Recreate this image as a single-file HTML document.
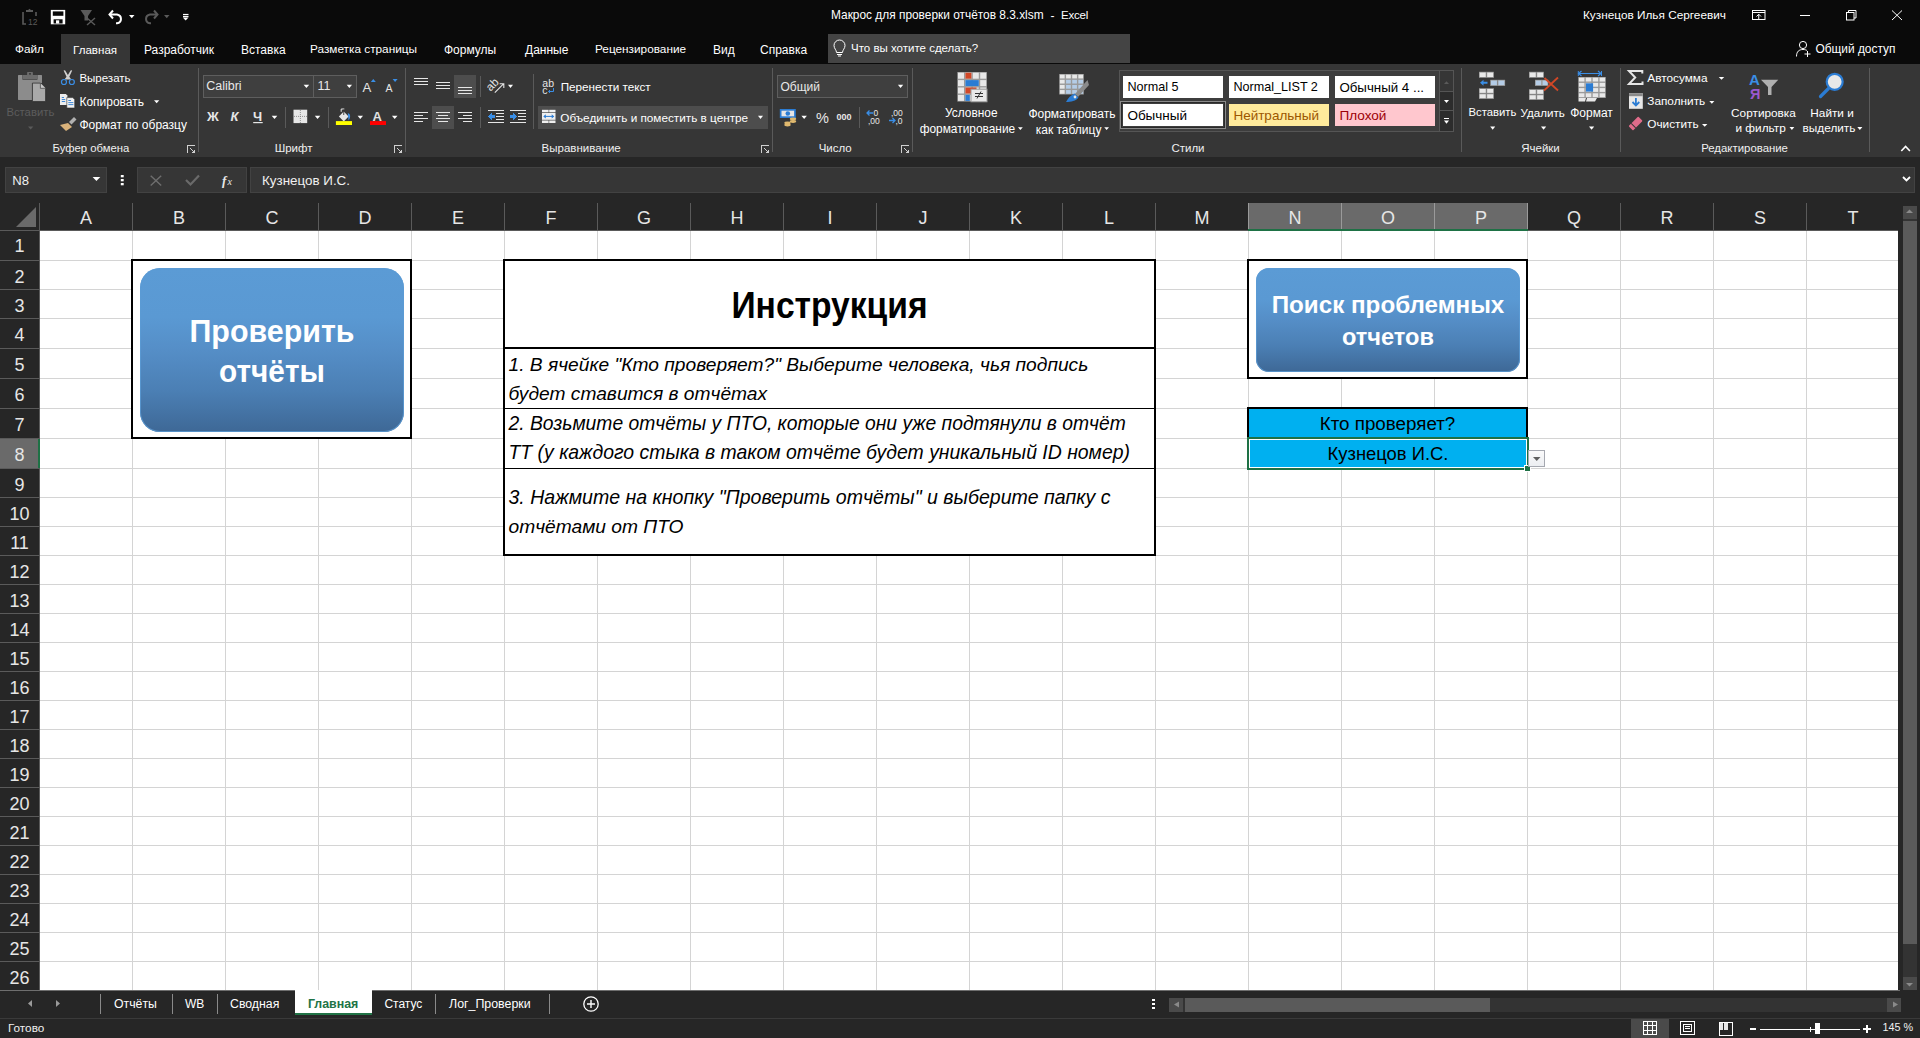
<!DOCTYPE html>
<html><head><meta charset="utf-8">
<style>
*{margin:0;padding:0;box-sizing:border-box}
html,body{width:1920px;height:1038px;overflow:hidden;background:#262626;font-family:"Liberation Sans",sans-serif;color:#fff}
.a{position:absolute}
.t{position:absolute;white-space:nowrap;line-height:1}
svg{position:absolute;overflow:visible}
.tab{font-size:12px;color:#fff}
.grp{font-size:11.5px;color:#e8e8e8}
.rb{font-size:12px;color:#fff}
.hd{font-size:18px;color:#e6e6e6;text-align:center;line-height:1}
</style></head><body>

<div class="a" style="left:0;top:0;width:1920px;height:64px;background:#0a0a0a"></div>
<div class="a" style="left:0;top:64px;width:1920px;height:93px;background:#363636"></div>
<div class="a" style="left:0;top:157px;width:1920px;height:833px;background:#262626"></div>
<svg width="200" height="34" style="left:0;top:0">
<g fill="none" stroke="#5a5a5a" stroke-width="1.6">
<path d="M23 12 V24 H26 M36 12 V16"/>
</g>
<path d="M27 11 L29.5 8.8 L32 11 Z" fill="#5a5a5a"/>
<rect x="26" y="10" width="7" height="2" fill="#5a5a5a"/>
<text x="28" y="24.5" font-family="Liberation Sans" font-size="8.5" fill="#5a5a5a">12</text>
<rect x="50.8" y="9.9" width="14.4" height="14.4" fill="#fff"/>
<rect x="52.8" y="11.4" width="10.6" height="4.4" fill="#0a0a0a"/>
<rect x="53.6" y="19.3" width="9" height="4.2" fill="#0a0a0a"/>
<rect x="56" y="20.3" width="3.2" height="3.2" fill="#fff"/>
<path d="M80.5 10 H92 L88 16 V20.5 H84.5 V16 Z" fill="#5a5a5a"/>
<path d="M87 18 L95 25 M95 18 L87 25" stroke="#5a5a5a" stroke-width="1.4"/>
<path d="M113 10.5 L109.5 14.5 L113 18.5" fill="none" stroke="#fff" stroke-width="2"/>
<path d="M110 14.5 H117 A5 4.5 0 0 1 117 23.3 H116" fill="none" stroke="#fff" stroke-width="2"/>
<path d="M129 15 H134.5 L131.75 18.3 Z" fill="#fff"/>
<path d="M154 10.5 L157.5 14.5 L154 18.5" fill="none" stroke="#5a5a5a" stroke-width="2"/>
<path d="M157 14.5 H150 A5 4.5 0 0 0 150 23.3 H151" fill="none" stroke="#5a5a5a" stroke-width="2"/>
<path d="M164 15 H169.5 L166.75 18.3 Z" fill="#5a5a5a"/>
<rect x="183" y="13.9" width="5.5" height="1.2" fill="#fff"/>
<rect x="183" y="15.9" width="5.5" height="1.2" fill="#fff"/>
<path d="M182.8 17.5 H188.5 L185.65 20.5 Z" fill="#fff"/>
</svg>
<div class="t" style="left:831px;top:9.8px;font-size:11.9px;color:#fff">Макрос для проверки отчётов 8.3.xlsm</div>
<div class="t" style="left:1050.5px;top:9.8px;font-size:12px;color:#fff">-</div>
<div class="t" style="left:1061px;top:9.8px;font-size:11.5px;color:#fff;letter-spacing:-0.2px">Excel</div>
<div class="t" style="left:1583px;top:9.8px;font-size:11.8px;color:#fff">Кузнецов Илья Сергеевич</div>
<svg width="200" height="34" style="left:1720px;top:0" fill="none" stroke="#fff" stroke-width="1">
<rect x="32.5" y="10.5" width="12.5" height="9"/>
<path d="M32.5 12.5 H45"/>
<path d="M38.75 19.5 V14.5 M36.5 16.5 L38.75 14.2 L41 16.5"/>
<path d="M80 15.5 H90"/>
<rect x="126.5" y="12.5" width="7.5" height="7.5"/>
<path d="M128.5 12.5 V10.5 H136 V18 H134"/>
<path d="M172 10.5 L182 20 M182 10.5 L172 20"/>
</svg>
<div class="a" style="left:61px;top:34px;width:69px;height:30px;background:#363636"></div>
<div class="t" style="left:15px;top:43.7px;font-size:11.8px;color:#fff">Файл</div>
<div class="t" style="left:73px;top:43.7px;font-size:11.6px;color:#fff">Главная</div>
<div class="t" style="left:144px;top:43.7px;font-size:12px;color:#fff">Разработчик</div>
<div class="t" style="left:241px;top:43.7px;font-size:12px;color:#fff">Вставка</div>
<div class="t" style="left:310px;top:43.7px;font-size:11.8px;color:#fff">Разметка страницы</div>
<div class="t" style="left:444px;top:43.7px;font-size:12px;color:#fff">Формулы</div>
<div class="t" style="left:525px;top:43.7px;font-size:12px;color:#fff">Данные</div>
<div class="t" style="left:595px;top:43.7px;font-size:11.8px;color:#fff">Рецензирование</div>
<div class="t" style="left:713px;top:43.7px;font-size:12px;color:#fff">Вид</div>
<div class="t" style="left:760px;top:43.7px;font-size:12px;color:#fff">Справка</div>
<div class="a" style="left:828px;top:34px;width:302px;height:29px;background:#444"></div>
<svg width="20" height="20" style="left:830px;top:39px" fill="none" stroke="#fff" stroke-width="1">
<path d="M6.5 13.5 C6.5 11 4 9.5 4 6.5 A5.5 5.5 0 0 1 15 6.5 C15 9.5 12.5 11 12.5 13.5 Z"/>
<path d="M7 15.5 H12 M8 17 H11"/>
</svg>
<div class="t" style="left:851px;top:42.5px;font-size:11.5px;color:#fff">Что вы хотите сделать?</div>
<svg width="20" height="20" style="left:1794px;top:39px" fill="none" stroke="#fff" stroke-width="1">
<circle cx="9" cy="6" r="3.6"/>
<path d="M2.5 17.5 C2.5 12.5 5 10.5 9 10.5 C11 10.5 12.2 11 13 11.5"/>
<path d="M13.5 12 V18 M10.5 15 H16.5"/>
</svg>
<div class="t" style="left:1815.5px;top:43.7px;font-size:11.9px;color:#fff">Общий доступ</div>
<svg width="1920" height="93" style="left:0;top:64px" shape-rendering="crispEdges"><line x1="198.5" y1="4" x2="198.5" y2="88" stroke="#5a5a5a"/><line x1="405.5" y1="4" x2="405.5" y2="88" stroke="#5a5a5a"/><line x1="772.5" y1="4" x2="772.5" y2="88" stroke="#5a5a5a"/><line x1="912.5" y1="4" x2="912.5" y2="88" stroke="#5a5a5a"/><line x1="1461.5" y1="4" x2="1461.5" y2="88" stroke="#5a5a5a"/><line x1="1620.5" y1="4" x2="1620.5" y2="88" stroke="#5a5a5a"/><line x1="1869.5" y1="4" x2="1869.5" y2="88" stroke="#5a5a5a"/><line x1="285.5" y1="43" x2="285.5" y2="64" stroke="#5a5a5a"/><line x1="328.5" y1="43" x2="328.5" y2="64" stroke="#5a5a5a"/><line x1="480.5" y1="12" x2="480.5" y2="33" stroke="#5a5a5a"/><line x1="480.5" y1="43" x2="480.5" y2="64" stroke="#5a5a5a"/><line x1="533.5" y1="10" x2="533.5" y2="65" stroke="#5a5a5a"/><line x1="859.5" y1="43" x2="859.5" y2="64" stroke="#5a5a5a"/></svg>
<div class="t" style="left:52.6px;top:143px;font-size:11.3px;color:#f0f0f0;">Буфер обмена</div>
<div class="t" style="left:274.7px;top:143px;font-size:11.5px;color:#f0f0f0;">Шрифт</div>
<div class="t" style="left:541.6px;top:143px;font-size:11.5px;color:#f0f0f0;">Выравнивание</div>
<div class="t" style="left:818.7px;top:143px;font-size:11.5px;color:#f0f0f0;">Число</div>
<div class="t" style="left:1171.4px;top:143px;font-size:11.5px;color:#f0f0f0;">Стили</div>
<div class="t" style="left:1521.2px;top:143px;font-size:11.5px;color:#f0f0f0;">Ячейки</div>
<div class="t" style="left:1701.2px;top:143px;font-size:11.4px;color:#f0f0f0;">Редактирование</div>
<svg width="1920" height="20" style="left:0;top:140px" fill="none" stroke="#d0d0d0" stroke-width="1" shape-rendering="crispEdges"><path d="M187.5 12.5 V5.5 H194.5"/><path d="M190 8 L194 12" /><path d="M191.5 12.5 H194.5 V9.5"/><path d="M394.5 12.5 V5.5 H401.5"/><path d="M397 8 L401 12" /><path d="M398.5 12.5 H401.5 V9.5"/><path d="M761.5 12.5 V5.5 H768.5"/><path d="M764 8 L768 12" /><path d="M765.5 12.5 H768.5 V9.5"/><path d="M901.5 12.5 V5.5 H908.5"/><path d="M904 8 L908 12" /><path d="M905.5 12.5 H908.5 V9.5"/></svg>
<svg width="200" height="93" style="left:0;top:64px">
<path d="M18 11.5 Q18 10.9 18.6 10.9 H22.5 V15.8 H37.4 V10.9 H41.4 Q42 10.9 42 11.5 V19 H32.3 V35.9 H18.6 Q18 35.9 18 35.3 Z" fill="#8c8c8c"/>
<path d="M23 11 H27.1 V8.6 Q27.1 8 27.7 8 H32.3 Q32.9 8 32.9 8.6 V11 H37 V15.2 H23 Z" fill="#6c6c6c"/>
<circle cx="30" cy="9.8" r="0.9" fill="#2a2a2a"/>
<path d="M32.4 19.1 H40.4 L45.6 24.3 V37.6 H32.4 Z" fill="#a9a9a9" stroke="#2e2e2e" stroke-width="0.8"/>
<path d="M40.4 19.1 V24.3 H45.6" fill="#c8c8c8" stroke="#2e2e2e" stroke-width="0.6"/>
<path d="M28 62.5 H33.3 L30.65 65.6 Z" fill="#5a5a5a"/>
<path d="M63.6 6.4 Q64.5 5.9 65.2 6.6 L67.9 11 L70.6 6.6 Q71.3 5.9 72.2 6.4 L69.3 12.8 L71.3 15.4 H64.5 L66.5 12.8 Z" fill="#d0d0d0"/>
<circle cx="63.95" cy="18" r="2.5" fill="none" stroke="#3a8ee6" stroke-width="1.2"/>
<circle cx="71.85" cy="18" r="2.5" fill="none" stroke="#3a8ee6" stroke-width="1.2"/>
<path d="M60 30 H65.9 L67.4 31.5 V40.9 H60 Z" fill="#ececec"/>
<path d="M61.8 33.5 H64 M61.8 35.5 H65.2 M61.8 37.5 H65.2" stroke="#2b7cd3" stroke-width="0.9"/>
<path d="M66.8 33.6 H72.8 L74.7 35.5 V44 H66.8 Z" fill="#f2f2f2" stroke="#2e2e2e" stroke-width=".6"/>
<path d="M68.3 36.5 H71 M68.3 38.6 H73.4 M68.3 40.6 H73.4" stroke="#2b7cd3" stroke-width="0.9"/>
<path d="M154 36.2 H159.3 L156.65 39.2 Z" fill="#fff"/>
<path d="M69 58 L74 53 L76.5 55.5 L71.5 60.5 Z" fill="#b0b0b0"/>
<path d="M68 59 L72 63 L66 67 L60 61 Z" fill="#d9b27a"/>
</svg>
<div class="t" style="left:6.4px;top:106.7px;font-size:11.3px;color:#5c5c5c;">Вставить</div>
<div class="t" style="left:79.4px;top:72.8px;font-size:11.5px;color:#fff;">Вырезать</div>
<div class="t" style="left:79.4px;top:95.5px;font-size:12px;color:#fff;">Копировать</div>
<div class="t" style="left:79.4px;top:119.2px;font-size:12px;color:#fff;">Формат по образцу</div>
<div class="a" style="left:203px;top:75px;width:111px;height:23px;background:#3f3f3f;border:1px solid #5e5e5e"></div>
<div class="a" style="left:313px;top:75px;width:44px;height:23px;background:#3f3f3f;border:1px solid #5e5e5e"></div>
<div class="t" style="left:206.2px;top:80.3px;font-size:12.5px;color:#e8e8e8;">Calibri</div>
<div class="t" style="left:317.6px;top:80.3px;font-size:12.5px;color:#e8e8e8;">11</div>
<svg width="300" height="93" style="left:190px;top:64px">
<path d="M113.6 20.7 H119.19999999999999 L116.39999999999999 24.0 Z" fill="#fff"/><path d="M156.7 20.7 H162.0 L159.35 24.0 Z" fill="#fff"/>
<text x="172.5" y="27.8" font-family="Liberation Sans" font-size="13.2" fill="#e6e6e6">A</text>
<path d="M180.8 18 L183.3 15 L185.8 18 Z" fill="#3a8ee6"/>
<text x="195.5" y="27.8" font-family="Liberation Sans" font-size="10.5" fill="#e6e6e6">A</text>
<path d="M202.6 15 L205.1 18 L207.6 15 Z" fill="#3a8ee6"/>
<text x="17" y="57.2" font-family="Liberation Sans" font-size="13" font-weight="bold" fill="#e6e6e6">Ж</text>
<text x="40.5" y="57.2" font-family="Liberation Sans" font-size="13" font-weight="bold" font-style="italic" fill="#e6e6e6">К</text>
<text x="63" y="57.2" font-family="Liberation Sans" font-size="13" font-weight="bold" fill="#e6e6e6">Ч</text>
<rect x="63.2" y="58" width="9.5" height="1.2" fill="#e6e6e6"/>
<path d="M81.7 51.7 H87.3 L84.5 55.0 Z" fill="#fff"/>
<rect x="103.5" y="45.7" width="13.7" height="13.4" fill="#e6e6e6"/>
<path d="M110.35 46 V59 M104 52.4 H117" stroke="#7a7a7a" stroke-width=".8" stroke-dasharray="1 1"/>
<path d="M124.8 51.7 H130.3 L127.55 55.0 Z" fill="#fff"/>
<path d="M153.75 47.6 L158.6 52.6 L153.75 57.4 L148.9 52.6 Z" fill="#e6e6e6"/>
<path d="M151.2 47.8 V45 H154.3" fill="none" stroke="#e6e6e6" stroke-width="1"/>
<path d="M153.75 45.5 V51" stroke="#363636" stroke-width=".9"/>
<path d="M157.8 49.3 C160.5 49.8 161 53 158.6 56.5 L158.2 52.6 Z" fill="#3a8ee6"/>
<rect x="145.9" y="57.1" width="16.1" height="3.9" fill="#ffff00"/>
<path d="M167.6 51.7 H173.0 L170.29999999999998 55.0 Z" fill="#fff"/>
<text x="182.6" y="56.8" font-family="Liberation Sans" font-size="13" font-weight="bold" fill="#e0e0e0">A</text>
<rect x="180" y="57.1" width="16" height="3.9" fill="#ff0000"/>
<path d="M201.9 51.7 H207.5 L204.70000000000002 55.0 Z" fill="#fff"/>
</svg>
<svg width="400" height="93" style="left:400px;top:64px" shape-rendering="crispEdges"><rect x="54" y="11" width="22" height="23" fill="#4d4d4d"/><rect x="32" y="42.3" width="22" height="22.4" fill="#4d4d4d"/><rect x="138" y="42.3" width="230" height="22.4" fill="#4d4d4d"/><rect x="14" y="14" width="14" height="1" fill="#e6e6e6"/><rect x="14" y="17" width="14" height="1" fill="#e6e6e6"/><rect x="14" y="20" width="14" height="1" fill="#e6e6e6"/><rect x="36" y="18" width="14" height="1" fill="#e6e6e6"/><rect x="36" y="21" width="14" height="1" fill="#e6e6e6"/><rect x="36" y="24" width="14" height="1" fill="#e6e6e6"/><rect x="58" y="23" width="14" height="1" fill="#e6e6e6"/><rect x="58" y="26" width="14" height="1" fill="#e6e6e6"/><rect x="58" y="29" width="14" height="1" fill="#e6e6e6"/><rect x="14" y="48" width="14" height="1" fill="#e6e6e6"/><rect x="14" y="51" width="9" height="1" fill="#e6e6e6"/><rect x="14" y="54" width="14" height="1" fill="#e6e6e6"/><rect x="14" y="57" width="9" height="1" fill="#e6e6e6"/><rect x="36.0" y="48" width="14" height="1" fill="#e6e6e6"/><rect x="38.0" y="51" width="10" height="1" fill="#e6e6e6"/><rect x="36.0" y="54" width="14" height="1" fill="#e6e6e6"/><rect x="38.0" y="57" width="10" height="1" fill="#e6e6e6"/><rect x="58" y="48" width="14" height="1" fill="#e6e6e6"/><rect x="63" y="51" width="9" height="1" fill="#e6e6e6"/><rect x="58" y="54" width="14" height="1" fill="#e6e6e6"/><rect x="63" y="57" width="9" height="1" fill="#e6e6e6"/><rect x="88" y="46" width="16" height="1" fill="#e6e6e6"/><rect x="88" y="58" width="16" height="1" fill="#e6e6e6"/><rect x="96" y="49" width="8" height="1" fill="#e6e6e6"/><rect x="96" y="52" width="8" height="1" fill="#e6e6e6"/><rect x="96" y="55" width="8" height="1" fill="#e6e6e6"/><path d="M88 52.5 L91.8 48.8 V51.2 H95 V53.8 H91.8 V56.2 Z" fill="#3a8ee6"/><rect x="110" y="46" width="16" height="1" fill="#e6e6e6"/><rect x="110" y="58" width="16" height="1" fill="#e6e6e6"/><rect x="118" y="49" width="8" height="1" fill="#e6e6e6"/><rect x="118" y="52" width="8" height="1" fill="#e6e6e6"/><rect x="118" y="55" width="8" height="1" fill="#e6e6e6"/><path d="M117 52.5 L113.2 48.8 V51.2 H110 V53.8 H113.2 V56.2 Z" fill="#3a8ee6"/></svg>
<svg width="400" height="93" style="left:400px;top:64px">
<text x="0" y="0" font-family="Liberation Sans" font-size="11.5" fill="#e6e6e6" transform="translate(90.5 27.8) rotate(-45)">ab</text>
<path d="M94.8 28.6 L103.5 19.9 M99.6 19.7 H103.8 V23.9" stroke="#e6e6e6" stroke-width="1.1" fill="none"/>
<path d="M108 20.7 H113 L110.5 24.0 Z" fill="#fff"/>
<text x="142.3" y="22.5" font-family="Liberation Sans" font-size="10.5" fill="#e6e6e6">ab</text>
<text x="142.3" y="29.8" font-family="Liberation Sans" font-size="10.5" fill="#e6e6e6">c</text>
<path d="M153.5 24 V27.5 H148.5 M150 26 L148.5 27.5 L150 29" stroke="#3a8ee6" stroke-width="1" fill="none"/>
<rect x="142" y="45.8" width="6.6" height="2.5" fill="#f0f0f0"/>
<rect x="149.2" y="45.8" width="6.3" height="2.5" fill="#f0f0f0"/>
<rect x="142" y="49" width="13.5" height="6.8" fill="#f0f0f0"/>
<rect x="142" y="56.5" width="6.6" height="2.5" fill="#f0f0f0"/>
<rect x="149.2" y="56.5" width="6.3" height="2.5" fill="#f0f0f0"/>
<path d="M144 52.4 H153.5" stroke="#2b7cd3" stroke-width="1"/>
<path d="M143.3 52.4 L145.8 50.2 V54.6 Z M154.2 52.4 L151.7 50.2 V54.6 Z" fill="#2b7cd3"/>
<path d="M358 51.7 H363 L360.5 55.0 Z" fill="#fff"/>
</svg>
<div class="t" style="left:560.7px;top:80.9px;font-size:11.7px;color:#fff;">Перенести текст</div>
<div class="t" style="left:560.3px;top:111.7px;font-size:11.75px;color:#fff;">Объединить и поместить в центре</div>
<div class="a" style="left:777px;top:75px;width:131px;height:23px;background:#3f3f3f;border:1px solid #5e5e5e"></div>
<div class="t" style="left:780.5px;top:80.5px;font-size:12px;color:#e8e8e8;">Общий</div>
<svg width="200" height="93" style="left:770px;top:64px">
<path d="M127.9 20.7 H133.20000000000002 L130.55 24.0 Z" fill="#fff"/>
<rect x="9.8" y="45" width="16" height="9" fill="#2b7cd3"/>
<rect x="11.5" y="46.7" width="12.6" height="5.6" fill="#e6e6e6"/>
<circle cx="17.8" cy="49.5" r="2.3" fill="#2b7cd3"/>
<ellipse cx="23" cy="55" rx="3.2" ry="1.4" fill="#e0b96e"/>
<ellipse cx="23" cy="57.5" rx="3.2" ry="1.4" fill="#e0b96e"/>
<ellipse cx="17.5" cy="59" rx="3.2" ry="1.4" fill="#e0b96e"/>
<ellipse cx="17.5" cy="61" rx="3.2" ry="1.4" fill="#e0b96e"/>
<path d="M31.4 51.7 H36.9 L34.15 55.0 Z" fill="#fff"/>
<text x="46" y="58.8" font-family="Liberation Sans" font-size="14.5" fill="#e6e6e6">%</text>
<text x="66.5" y="56" font-family="Liberation Sans" font-size="9" font-weight="bold" fill="#e6e6e6">000</text>
<path d="M97 49 H103 M99.5 46.5 L97 49 L99.5 51.5" stroke="#3a8ee6" stroke-width="1.3" fill="none"/>
<text x="103.5" y="52" font-family="Liberation Sans" font-size="8.5" fill="#e6e6e6">0</text>
<text x="98" y="60.3" font-family="Liberation Sans" font-size="8.5" fill="#e6e6e6">,00</text>
<text x="121" y="52" font-family="Liberation Sans" font-size="8.5" fill="#e6e6e6">,00</text>
<path d="M119 56.5 H125 M122.5 54 L125 56.5 L122.5 59" stroke="#3a8ee6" stroke-width="1.3" fill="none"/>
<text x="125.5" y="60.3" font-family="Liberation Sans" font-size="8.5" fill="#e6e6e6">,0</text>
</svg>
<svg width="300" height="93" style="left:940px;top:64px"><rect x="17.3" y="8" width="29.6" height="29.6" fill="#9a9a9a"/><rect x="18.0" y="8.7" width="6.0" height="6.0" fill="#e8e8e8"/><rect x="25.400000000000002" y="8.7" width="6.0" height="6.0" fill="#e8e8e8"/><rect x="32.800000000000004" y="8.7" width="6.0" height="6.0" fill="#e8e8e8"/><rect x="40.2" y="8.7" width="6.0" height="6.0" fill="#e8e8e8"/><rect x="18.0" y="16.1" width="6.0" height="6.0" fill="#e8e8e8"/><rect x="25.400000000000002" y="16.1" width="6.0" height="6.0" fill="#e8e8e8"/><rect x="32.800000000000004" y="16.1" width="6.0" height="6.0" fill="#e8e8e8"/><rect x="40.2" y="16.1" width="6.0" height="6.0" fill="#e8e8e8"/><rect x="18.0" y="23.5" width="6.0" height="6.0" fill="#e8e8e8"/><rect x="25.400000000000002" y="23.5" width="6.0" height="6.0" fill="#e8e8e8"/><rect x="32.800000000000004" y="23.5" width="6.0" height="6.0" fill="#e8e8e8"/><rect x="40.2" y="23.5" width="6.0" height="6.0" fill="#e8e8e8"/><rect x="18.0" y="30.900000000000002" width="6.0" height="6.0" fill="#e8e8e8"/><rect x="25.400000000000002" y="30.900000000000002" width="6.0" height="6.0" fill="#e8e8e8"/><rect x="32.800000000000004" y="30.900000000000002" width="6.0" height="6.0" fill="#e8e8e8"/><rect x="40.2" y="30.900000000000002" width="6.0" height="6.0" fill="#e8e8e8"/><rect x="25.400000000000002" y="8.7" width="6.0" height="6.0" fill="#d24726"/><rect x="25.400000000000002" y="16.1" width="13.4" height="6.0" fill="#2b7cd3"/><rect x="25.400000000000002" y="23.5" width="11.100000000000001" height="6.0" fill="#d24726"/><rect x="25.400000000000002" y="30.900000000000002" width="4.44" height="6.0" fill="#2b7cd3"/><rect x="31" y="25.2" width="16" height="12.6" fill="#e8e8e8" stroke="#9a9a9a" stroke-width="1"/><path d="M35 29.5 H43 M35 32.5 H43 M41 27.5 L37 34.5" stroke="#333" stroke-width="1"/><rect x="119.2" y="10" width="24.6" height="20.5" fill="#9a9a9a"/><rect x="119.9" y="10.7" width="4.75" height="3.72" fill="#e8e8e8"/><rect x="126.05000000000001" y="10.7" width="4.75" height="3.72" fill="#e8e8e8"/><rect x="132.2" y="10.7" width="4.75" height="3.72" fill="#e8e8e8"/><rect x="138.35" y="10.7" width="4.75" height="3.72" fill="#e8e8e8"/><rect x="119.9" y="15.82" width="4.75" height="3.72" fill="#e8e8e8"/><rect x="126.05000000000001" y="15.82" width="4.75" height="3.72" fill="#b4cce6"/><rect x="132.2" y="15.82" width="4.75" height="3.72" fill="#b4cce6"/><rect x="138.35" y="15.82" width="4.75" height="3.72" fill="#b4cce6"/><rect x="119.9" y="20.94" width="4.75" height="3.72" fill="#e8e8e8"/><rect x="126.05000000000001" y="20.94" width="4.75" height="3.72" fill="#b4cce6"/><rect x="132.2" y="20.94" width="4.75" height="3.72" fill="#b4cce6"/><rect x="138.35" y="20.94" width="4.75" height="3.72" fill="#b4cce6"/><rect x="119.9" y="26.06" width="4.75" height="3.72" fill="#e8e8e8"/><rect x="126.05000000000001" y="26.06" width="4.75" height="3.72" fill="#b4cce6"/><rect x="132.2" y="26.06" width="4.75" height="3.72" fill="#b4cce6"/><rect x="138.35" y="26.06" width="4.75" height="3.72" fill="#b4cce6"/><path d="M147.5 16 L149 21 L138 33 L135 30 Z" fill="#8a8a8a"/><path d="M134.5 29.5 L138.5 33.5 C136 37 131 38 126 38 C128 34 131 31 134.5 29.5 Z" fill="#2b7cd3"/><circle cx="135" cy="33" r="1.4" fill="#e8e8e8"/><path d="M78 63.3 H82.8 L80.4 66.0 Z" fill="#fff"/><path d="M164.2 63.3 H169.0 L166.6 66.0 Z" fill="#fff"/></svg>
<div class="t" style="left:945px;top:108px;font-size:11.9px;color:#fff;">Условное</div>
<div class="t" style="left:919.7px;top:124.2px;font-size:11.9px;color:#fff;">форматирование</div>
<div class="t" style="left:1028.4px;top:108px;font-size:12px;color:#fff;">Форматировать</div>
<div class="t" style="left:1035.7px;top:124.2px;font-size:12px;color:#fff;">как таблицу</div>
<div class="a" style="left:1119px;top:70px;width:335px;height:62px;background:#3d3d3d;border:1px solid #555"></div>
<div class="a" style="left:1120px;top:101px;width:106px;height:28px;border:1px solid #8a8a8a"></div>
<div class="a" style="left:1121px;top:102px;width:104px;height:26px;border:1px solid #2a2a2a"></div>
<div class="a" style="left:1123px;top:76px;width:100px;height:22px;background:#fff"></div>
<div class="t" style="left:1127.4px;top:80.8px;font-size:12.6px;color:#000;">Normal 5</div>
<div class="a" style="left:1229px;top:76px;width:100px;height:22px;background:#fff"></div>
<div class="t" style="left:1233.4px;top:80.8px;font-size:12.6px;color:#000;">Normal_LIST 2</div>
<div class="a" style="left:1335px;top:76px;width:100px;height:22px;background:#fff"></div>
<div class="t" style="left:1339.4px;top:80.8px;font-size:13.3px;color:#000;">Обычный 4 ...</div>
<div class="a" style="left:1123px;top:104px;width:100px;height:22px;background:#fff"></div>
<div class="t" style="left:1127.4px;top:108.8px;font-size:13.5px;color:#000;">Обычный</div>
<div class="a" style="left:1229px;top:104px;width:100px;height:22px;background:#ffeb9c"></div>
<div class="t" style="left:1233.4px;top:108.8px;font-size:13.5px;color:#9c5700;">Нейтральный</div>
<div class="a" style="left:1335px;top:104px;width:100px;height:22px;background:#ffc7ce"></div>
<div class="t" style="left:1339.4px;top:108.8px;font-size:13.6px;color:#9c0006;">Плохой</div>
<svg width="20" height="70" style="left:1438px;top:68px" shape-rendering="crispEdges">
<rect x="1.5" y="2" width="14" height="21" fill="#363636" stroke="#555" stroke-width="1"/>
<rect x="1.5" y="23" width="14" height="19" fill="#2c2c2c" stroke="#555" stroke-width="1"/>
<rect x="1.5" y="42" width="14" height="21.5" fill="#2c2c2c" stroke="#555" stroke-width="1"/>
<path d="M6 16 L8.5 13.3 L11 16 Z" fill="#5a5a5a" shape-rendering="auto"/>
<path d="M6 32 H11 L8.5 34.9 Z" fill="#fff" shape-rendering="auto"/>
<rect x="6" y="49.5" width="5" height="1.2" fill="#fff"/>
<path d="M6 52.6 H11 L8.5 55.8 Z" fill="#fff" shape-rendering="auto"/>
</svg>
<svg width="200" height="93" style="left:1460px;top:64px"><rect x="19" y="7.8" width="7.5" height="6" fill="#9a9a9a"/><rect x="19.8" y="8.6" width="5.9" height="4.4" fill="#e8e8e8"/><rect x="26.4" y="7.8" width="7.5" height="6" fill="#9a9a9a"/><rect x="27.2" y="8.6" width="5.9" height="4.4" fill="#e8e8e8"/><rect x="30.2" y="15.8" width="7.5" height="6.1" fill="#9a9a9a"/><rect x="31.0" y="16.6" width="5.9" height="4.5" fill="#b4cce6"/><rect x="37.6" y="15.8" width="7.5" height="6.1" fill="#9a9a9a"/><rect x="38.4" y="16.6" width="5.9" height="4.5" fill="#b4cce6"/><path d="M20 18.8 L23.5 15.8 V17.8 H27.5 V19.8 H23.5 V21.8 Z" fill="#3a8ee6"/><rect x="19" y="24.2" width="7.5" height="5.4" fill="#9a9a9a"/><rect x="19.8" y="25.0" width="5.9" height="3.8000000000000003" fill="#e8e8e8"/><rect x="26.4" y="24.2" width="7.5" height="5.4" fill="#9a9a9a"/><rect x="27.2" y="25.0" width="5.9" height="3.8000000000000003" fill="#e8e8e8"/><rect x="19" y="29.5" width="7.5" height="5.4" fill="#9a9a9a"/><rect x="19.8" y="30.3" width="5.9" height="3.8000000000000003" fill="#e8e8e8"/><rect x="26.4" y="29.5" width="7.5" height="5.4" fill="#9a9a9a"/><rect x="27.2" y="30.3" width="5.9" height="3.8000000000000003" fill="#e8e8e8"/><path d="M30.2 62.5 H35.2 L32.7 65.8 Z" fill="#fff"/><rect x="69" y="7.8" width="7.5" height="6" fill="#9a9a9a"/><rect x="69.8" y="8.6" width="5.9" height="4.4" fill="#e8e8e8"/><rect x="76.4" y="7.8" width="7.5" height="6" fill="#9a9a9a"/><rect x="77.2" y="8.6" width="5.9" height="4.4" fill="#e8e8e8"/><rect x="75" y="15.8" width="7" height="6.1" fill="#9a9a9a"/><rect x="75.8" y="16.6" width="5.4" height="4.5" fill="#b4cce6"/><rect x="81.8" y="15.8" width="6.5" height="6.1" fill="#9a9a9a"/><rect x="82.6" y="16.6" width="4.9" height="4.5" fill="#b4cce6"/><rect x="69" y="25.2" width="7.5" height="5.4" fill="#9a9a9a"/><rect x="69.8" y="26.0" width="5.9" height="3.8000000000000003" fill="#e8e8e8"/><rect x="76.4" y="25.2" width="7.5" height="5.4" fill="#9a9a9a"/><rect x="77.2" y="26.0" width="5.9" height="3.8000000000000003" fill="#e8e8e8"/><rect x="69" y="30.5" width="7.5" height="5.4" fill="#9a9a9a"/><rect x="69.8" y="31.3" width="5.9" height="3.8000000000000003" fill="#e8e8e8"/><rect x="76.4" y="30.5" width="7.5" height="5.4" fill="#9a9a9a"/><rect x="77.2" y="31.3" width="5.9" height="3.8000000000000003" fill="#e8e8e8"/><path d="M84.5 14 L98 26.5 M98 13.5 L84 26.5" stroke="#d24726" stroke-width="1.8"/><path d="M81 62.5 H86.2 L83.6 65.8 Z" fill="#fff"/><path d="M118.5 9.5 H141 M121.5 7 L118.5 9.5 L121.5 12 M138 7 L141 9.5 L138 12" stroke="#3a8ee6" stroke-width="1.1" fill="none"/><path d="M118.3 7 V12 M141.5 7 V12" stroke="#3a8ee6" stroke-width="1"/><rect x="118.2" y="13" width="27.6" height="21" fill="#9a9a9a"/><rect x="118.9" y="13.7" width="5.5" height="3.8" fill="#e8e8e8"/><rect x="125.80000000000001" y="13.7" width="5.5" height="3.8" fill="#e8e8e8"/><rect x="132.70000000000002" y="13.7" width="5.5" height="3.8" fill="#e8e8e8"/><rect x="139.60000000000002" y="13.7" width="5.5" height="3.8" fill="#e8e8e8"/><rect x="118.9" y="18.9" width="5.5" height="3.8" fill="#e8e8e8"/><rect x="125.80000000000001" y="18.9" width="5.5" height="3.8" fill="#e8e8e8"/><rect x="132.70000000000002" y="18.9" width="5.5" height="3.8" fill="#e8e8e8"/><rect x="139.60000000000002" y="18.9" width="5.5" height="3.8" fill="#e8e8e8"/><rect x="118.9" y="24.1" width="5.5" height="3.8" fill="#e8e8e8"/><rect x="125.80000000000001" y="24.1" width="5.5" height="3.8" fill="#e8e8e8"/><rect x="132.70000000000002" y="24.1" width="5.5" height="3.8" fill="#e8e8e8"/><rect x="139.60000000000002" y="24.1" width="5.5" height="3.8" fill="#e8e8e8"/><rect x="118.9" y="29.3" width="5.5" height="3.8" fill="#e8e8e8"/><rect x="125.80000000000001" y="29.3" width="5.5" height="3.8" fill="#e8e8e8"/><rect x="132.70000000000002" y="29.3" width="5.5" height="3.8" fill="#e8e8e8"/><rect x="139.60000000000002" y="29.3" width="5.5" height="3.8" fill="#e8e8e8"/><rect x="126" y="19.3" width="7.1" height="8.3" fill="#2b7cd3"/><path d="M118.5 34 H126 L125 37.5 H118.5 Z M127 34 H137 L135 37.5 H126 Z" fill="#e8e8e8"/><path d="M129 62.5 H134.2 L131.6 65.8 Z" fill="#fff"/><path d="M182.3 9.5 V7 H169 L175.2 13.5 L169 20 H182.5 V17.5" stroke="#e6e6e6" stroke-width="2" fill="none" stroke-linejoin="miter"/><rect x="169" y="29.2" width="13.8" height="15.6" fill="#e8e8e8"/><rect x="169" y="29.2" width="13.8" height="3" fill="#8a8a8a"/><path d="M175.9 34 V41 M172.5 38 L175.9 41.4 L179.3 38" stroke="#2b7cd3" stroke-width="1.8" fill="none"/><g transform="translate(175.6 59.5) rotate(-45)"><rect x="-6.8" y="-3.1" width="13.6" height="6.2" rx="0.8" fill="#e06c8a"/><rect x="-3.6" y="-3.2" width="1" height="6.4" fill="#363636"/></g></svg>
<div class="t" style="left:1468.5px;top:107.3px;font-size:11.3px;color:#fff;">Вставить</div>
<div class="t" style="left:1520.6px;top:107.3px;font-size:11.6px;color:#fff;">Удалить</div>
<div class="t" style="left:1570.2px;top:107.3px;font-size:12px;color:#fff;">Формат</div>
<div class="t" style="left:1647.3px;top:73.3px;font-size:11.8px;color:#fff;">Автосумма</div>
<div class="t" style="left:1647.3px;top:96px;font-size:11.8px;color:#fff;">Заполнить</div>
<div class="t" style="left:1647.3px;top:118.6px;font-size:11.8px;color:#fff;">Очистить</div>
<div class="t" style="left:1731.1px;top:107.6px;font-size:11.8px;color:#fff;">Сортировка</div>
<div class="t" style="left:1735.5px;top:123.2px;font-size:11.8px;color:#fff;">и фильтр</div>
<div class="t" style="left:1810.3px;top:107.6px;font-size:11.8px;color:#fff;">Найти и</div>
<div class="t" style="left:1802.6px;top:123.2px;font-size:11.8px;color:#fff;">выделить</div>
<svg width="300" height="93" style="left:1620px;top:64px"><path d="M98.75 13.1 H104.25 L101.5 15.8 Z" fill="#fff"/><path d="M89.3 37 H94.39999999999999 L91.85 39.7 Z" fill="#fff"/><path d="M82 60 H87.4 L84.7 62.7 Z" fill="#fff"/><path d="M169.5 63 H174.3 L171.9 66 Z" fill="#fff"/><path d="M237.3 63 H242.4 L239.85000000000002 66 Z" fill="#fff"/><text x="129" y="20.5" font-family="Liberation Sans" font-size="15" font-weight="bold" fill="#3a8ee6">A</text><text x="130" y="35" font-family="Liberation Sans" font-size="14.5" font-weight="bold" fill="#9b59d0">Я</text><path d="M141 15.7 H158.25 L151.5 23 V30.9 H148 V23 Z" fill="#b0b0b0"/><circle cx="214.7" cy="17.8" r="8" fill="#e8e8e8" stroke="#2b7cd3" stroke-width="2.2"/><path d="M208.5 24.5 L200.5 32.5" stroke="#2b7cd3" stroke-width="3.2" stroke-linecap="round"/><path d="M281.3 87 L285.6 82.5 L289.9 87" stroke="#fff" stroke-width="1.6" fill="none"/></svg>
<div class="a" style="left:40px;top:231px;width:1858px;height:759px;background:#fff"></div>
<svg width="1920" height="1038" style="left:0;top:0" shape-rendering="crispEdges"><line x1="132.5" y1="231" x2="132.5" y2="990" stroke="#d4d4d4"/><line x1="225.5" y1="231" x2="225.5" y2="990" stroke="#d4d4d4"/><line x1="318.5" y1="231" x2="318.5" y2="990" stroke="#d4d4d4"/><line x1="411.5" y1="231" x2="411.5" y2="990" stroke="#d4d4d4"/><line x1="504.5" y1="231" x2="504.5" y2="990" stroke="#d4d4d4"/><line x1="597.5" y1="231" x2="597.5" y2="990" stroke="#d4d4d4"/><line x1="690.5" y1="231" x2="690.5" y2="990" stroke="#d4d4d4"/><line x1="783.5" y1="231" x2="783.5" y2="990" stroke="#d4d4d4"/><line x1="876.5" y1="231" x2="876.5" y2="990" stroke="#d4d4d4"/><line x1="969.5" y1="231" x2="969.5" y2="990" stroke="#d4d4d4"/><line x1="1062.5" y1="231" x2="1062.5" y2="990" stroke="#d4d4d4"/><line x1="1155.5" y1="231" x2="1155.5" y2="990" stroke="#d4d4d4"/><line x1="1248.5" y1="231" x2="1248.5" y2="990" stroke="#d4d4d4"/><line x1="1341.5" y1="231" x2="1341.5" y2="990" stroke="#d4d4d4"/><line x1="1434.5" y1="231" x2="1434.5" y2="990" stroke="#d4d4d4"/><line x1="1527.5" y1="231" x2="1527.5" y2="990" stroke="#d4d4d4"/><line x1="1620.5" y1="231" x2="1620.5" y2="990" stroke="#d4d4d4"/><line x1="1713.5" y1="231" x2="1713.5" y2="990" stroke="#d4d4d4"/><line x1="1806.5" y1="231" x2="1806.5" y2="990" stroke="#d4d4d4"/><line x1="40" y1="260.5" x2="1898" y2="260.5" stroke="#d4d4d4"/><line x1="40" y1="289.5" x2="1898" y2="289.5" stroke="#d4d4d4"/><line x1="40" y1="318.5" x2="1898" y2="318.5" stroke="#d4d4d4"/><line x1="40" y1="348.5" x2="1898" y2="348.5" stroke="#d4d4d4"/><line x1="40" y1="378.5" x2="1898" y2="378.5" stroke="#d4d4d4"/><line x1="40" y1="408.5" x2="1898" y2="408.5" stroke="#d4d4d4"/><line x1="40" y1="438.5" x2="1898" y2="438.5" stroke="#d4d4d4"/><line x1="40" y1="468.5" x2="1898" y2="468.5" stroke="#d4d4d4"/><line x1="40" y1="497.5" x2="1898" y2="497.5" stroke="#d4d4d4"/><line x1="40" y1="526.5" x2="1898" y2="526.5" stroke="#d4d4d4"/><line x1="40" y1="555.5" x2="1898" y2="555.5" stroke="#d4d4d4"/><line x1="40" y1="584.5" x2="1898" y2="584.5" stroke="#d4d4d4"/><line x1="40" y1="613.5" x2="1898" y2="613.5" stroke="#d4d4d4"/><line x1="40" y1="642.5" x2="1898" y2="642.5" stroke="#d4d4d4"/><line x1="40" y1="671.5" x2="1898" y2="671.5" stroke="#d4d4d4"/><line x1="40" y1="700.5" x2="1898" y2="700.5" stroke="#d4d4d4"/><line x1="40" y1="729.5" x2="1898" y2="729.5" stroke="#d4d4d4"/><line x1="40" y1="758.5" x2="1898" y2="758.5" stroke="#d4d4d4"/><line x1="40" y1="787.5" x2="1898" y2="787.5" stroke="#d4d4d4"/><line x1="40" y1="816.5" x2="1898" y2="816.5" stroke="#d4d4d4"/><line x1="40" y1="845.5" x2="1898" y2="845.5" stroke="#d4d4d4"/><line x1="40" y1="874.5" x2="1898" y2="874.5" stroke="#d4d4d4"/><line x1="40" y1="903.5" x2="1898" y2="903.5" stroke="#d4d4d4"/><line x1="40" y1="932.5" x2="1898" y2="932.5" stroke="#d4d4d4"/><line x1="40" y1="961.5" x2="1898" y2="961.5" stroke="#d4d4d4"/><line x1="39.5" y1="203" x2="39.5" y2="231" stroke="#5a5a5a"/><line x1="132.5" y1="203" x2="132.5" y2="231" stroke="#5a5a5a"/><line x1="225.5" y1="203" x2="225.5" y2="231" stroke="#5a5a5a"/><line x1="318.5" y1="203" x2="318.5" y2="231" stroke="#5a5a5a"/><line x1="411.5" y1="203" x2="411.5" y2="231" stroke="#5a5a5a"/><line x1="504.5" y1="203" x2="504.5" y2="231" stroke="#5a5a5a"/><line x1="597.5" y1="203" x2="597.5" y2="231" stroke="#5a5a5a"/><line x1="690.5" y1="203" x2="690.5" y2="231" stroke="#5a5a5a"/><line x1="783.5" y1="203" x2="783.5" y2="231" stroke="#5a5a5a"/><line x1="876.5" y1="203" x2="876.5" y2="231" stroke="#5a5a5a"/><line x1="969.5" y1="203" x2="969.5" y2="231" stroke="#5a5a5a"/><line x1="1062.5" y1="203" x2="1062.5" y2="231" stroke="#5a5a5a"/><line x1="1155.5" y1="203" x2="1155.5" y2="231" stroke="#5a5a5a"/><line x1="1248.5" y1="203" x2="1248.5" y2="231" stroke="#5a5a5a"/><line x1="1341.5" y1="203" x2="1341.5" y2="231" stroke="#5a5a5a"/><line x1="1434.5" y1="203" x2="1434.5" y2="231" stroke="#5a5a5a"/><line x1="1527.5" y1="203" x2="1527.5" y2="231" stroke="#5a5a5a"/><line x1="1620.5" y1="203" x2="1620.5" y2="231" stroke="#5a5a5a"/><line x1="1713.5" y1="203" x2="1713.5" y2="231" stroke="#5a5a5a"/><line x1="1806.5" y1="203" x2="1806.5" y2="231" stroke="#5a5a5a"/><line x1="0" y1="230.5" x2="40" y2="230.5" stroke="#5a5a5a"/><line x1="0" y1="260.5" x2="40" y2="260.5" stroke="#5a5a5a"/><line x1="0" y1="289.5" x2="40" y2="289.5" stroke="#5a5a5a"/><line x1="0" y1="318.5" x2="40" y2="318.5" stroke="#5a5a5a"/><line x1="0" y1="348.5" x2="40" y2="348.5" stroke="#5a5a5a"/><line x1="0" y1="378.5" x2="40" y2="378.5" stroke="#5a5a5a"/><line x1="0" y1="408.5" x2="40" y2="408.5" stroke="#5a5a5a"/><line x1="0" y1="438.5" x2="40" y2="438.5" stroke="#5a5a5a"/><line x1="0" y1="468.5" x2="40" y2="468.5" stroke="#5a5a5a"/><line x1="0" y1="497.5" x2="40" y2="497.5" stroke="#5a5a5a"/><line x1="0" y1="526.5" x2="40" y2="526.5" stroke="#5a5a5a"/><line x1="0" y1="555.5" x2="40" y2="555.5" stroke="#5a5a5a"/><line x1="0" y1="584.5" x2="40" y2="584.5" stroke="#5a5a5a"/><line x1="0" y1="613.5" x2="40" y2="613.5" stroke="#5a5a5a"/><line x1="0" y1="642.5" x2="40" y2="642.5" stroke="#5a5a5a"/><line x1="0" y1="671.5" x2="40" y2="671.5" stroke="#5a5a5a"/><line x1="0" y1="700.5" x2="40" y2="700.5" stroke="#5a5a5a"/><line x1="0" y1="729.5" x2="40" y2="729.5" stroke="#5a5a5a"/><line x1="0" y1="758.5" x2="40" y2="758.5" stroke="#5a5a5a"/><line x1="0" y1="787.5" x2="40" y2="787.5" stroke="#5a5a5a"/><line x1="0" y1="816.5" x2="40" y2="816.5" stroke="#5a5a5a"/><line x1="0" y1="845.5" x2="40" y2="845.5" stroke="#5a5a5a"/><line x1="0" y1="874.5" x2="40" y2="874.5" stroke="#5a5a5a"/><line x1="0" y1="903.5" x2="40" y2="903.5" stroke="#5a5a5a"/><line x1="0" y1="932.5" x2="40" y2="932.5" stroke="#5a5a5a"/><line x1="0" y1="961.5" x2="40" y2="961.5" stroke="#5a5a5a"/><line x1="40" y1="230.5" x2="1898" y2="230.5" stroke="#5a5a5a"/><line x1="39.5" y1="231" x2="39.5" y2="990" stroke="#5a5a5a"/></svg>
<div class="a" style="left:1249px;top:203px;width:278px;height:27px;background:#6a6a6a"></div>
<svg width="1920" height="40" style="left:0;top:200px" shape-rendering="crispEdges"><line x1="1341.5" y1="3" x2="1341.5" y2="30" stroke="#9a9a9a"/><line x1="1434.5" y1="3" x2="1434.5" y2="30" stroke="#9a9a9a"/><line x1="1248.5" y1="3" x2="1248.5" y2="30" stroke="#9a9a9a"/><line x1="1527.5" y1="3" x2="1527.5" y2="30" stroke="#9a9a9a"/></svg>
<div class="a" style="left:1248px;top:229px;width:280px;height:2px;background:#1e7145"></div>
<div class="a" style="left:0;top:439px;width:39px;height:29px;background:#6a6a6a"></div>
<div class="a" style="left:38px;top:439px;width:2px;height:29px;background:#1e7145"></div>
<svg width="40" height="30" style="left:0;top:203px"><polygon points="36,4 36,24 16,24" fill="#6a6a6a"/></svg>
<div class="t hd" style="left:40px;top:209px;width:92px">A</div>
<div class="t hd" style="left:133px;top:209px;width:92px">B</div>
<div class="t hd" style="left:226px;top:209px;width:92px">C</div>
<div class="t hd" style="left:319px;top:209px;width:92px">D</div>
<div class="t hd" style="left:412px;top:209px;width:92px">E</div>
<div class="t hd" style="left:505px;top:209px;width:92px">F</div>
<div class="t hd" style="left:598px;top:209px;width:92px">G</div>
<div class="t hd" style="left:691px;top:209px;width:92px">H</div>
<div class="t hd" style="left:784px;top:209px;width:92px">I</div>
<div class="t hd" style="left:877px;top:209px;width:92px">J</div>
<div class="t hd" style="left:970px;top:209px;width:92px">K</div>
<div class="t hd" style="left:1063px;top:209px;width:92px">L</div>
<div class="t hd" style="left:1156px;top:209px;width:92px">M</div>
<div class="t hd" style="left:1249px;top:209px;width:92px">N</div>
<div class="t hd" style="left:1342px;top:209px;width:92px">O</div>
<div class="t hd" style="left:1435px;top:209px;width:92px">P</div>
<div class="t hd" style="left:1528px;top:209px;width:92px">Q</div>
<div class="t hd" style="left:1621px;top:209px;width:92px">R</div>
<div class="t hd" style="left:1714px;top:209px;width:92px">S</div>
<div class="t hd" style="left:1807px;top:209px;width:92px">T</div>
<div class="t hd" style="left:0;top:237px;width:39px">1</div>
<div class="t hd" style="left:0;top:268px;width:39px">2</div>
<div class="t hd" style="left:0;top:297px;width:39px">3</div>
<div class="t hd" style="left:0;top:326px;width:39px">4</div>
<div class="t hd" style="left:0;top:356px;width:39px">5</div>
<div class="t hd" style="left:0;top:386px;width:39px">6</div>
<div class="t hd" style="left:0;top:416px;width:39px">7</div>
<div class="t hd" style="left:0;top:446px;width:39px">8</div>
<div class="t hd" style="left:0;top:476px;width:39px">9</div>
<div class="t hd" style="left:0;top:505px;width:39px">10</div>
<div class="t hd" style="left:0;top:534px;width:39px">11</div>
<div class="t hd" style="left:0;top:563px;width:39px">12</div>
<div class="t hd" style="left:0;top:592px;width:39px">13</div>
<div class="t hd" style="left:0;top:621px;width:39px">14</div>
<div class="t hd" style="left:0;top:650px;width:39px">15</div>
<div class="t hd" style="left:0;top:679px;width:39px">16</div>
<div class="t hd" style="left:0;top:708px;width:39px">17</div>
<div class="t hd" style="left:0;top:737px;width:39px">18</div>
<div class="t hd" style="left:0;top:766px;width:39px">19</div>
<div class="t hd" style="left:0;top:795px;width:39px">20</div>
<div class="t hd" style="left:0;top:824px;width:39px">21</div>
<div class="t hd" style="left:0;top:853px;width:39px">22</div>
<div class="t hd" style="left:0;top:882px;width:39px">23</div>
<div class="t hd" style="left:0;top:911px;width:39px">24</div>
<div class="t hd" style="left:0;top:940px;width:39px">25</div>
<div class="t hd" style="left:0;top:969px;width:39px">26</div>
<div class="a" style="left:5px;top:167px;width:102px;height:26px;background:#363636;border:1px solid #424242"></div>
<div class="t" style="left:12.2px;top:173.5px;font-size:13.1px;color:#f0f0f0;">N8</div>
<div class="a" style="left:137px;top:167px;width:110px;height:26px;background:#363636;border:1px solid #424242"></div>
<div class="a" style="left:250px;top:167px;width:1665px;height:26px;background:#363636;border:1px solid #424242"></div>
<div class="t" style="left:262px;top:173.5px;font-size:13.4px;color:#f0f0f0;">Кузнецов И.С.</div>
<svg width="260" height="46" style="left:0;top:157px">
<path d="M92.6 20.1 H100.3 L96.45 24 Z" fill="#fff"/>
<rect x="120.8" y="18" width="2.9" height="2.3" fill="#fff"/>
<rect x="120.8" y="22" width="2.9" height="2.3" fill="#fff"/>
<rect x="120.8" y="26" width="2.9" height="2.3" fill="#fff"/>
<path d="M150.7 18.7 L161.2 28.5 M161.2 18.7 L150.7 28.5" stroke="#6e6e6e" stroke-width="1.4"/>
<path d="M186 23 L190.5 27.5 L199 18.5" stroke="#6a6a6a" stroke-width="2.2" fill="none"/>
<text x="222" y="27.5" font-family="Liberation Serif" font-style="italic" font-weight="bold" font-size="13" fill="#e8e8e8">f</text>
<text x="227.5" y="27.5" font-family="Liberation Serif" font-style="italic" font-size="10" fill="#e8e8e8">x</text>
</svg>
<svg width="20" height="20" style="left:1898px;top:169px"><path d="M5 8 L8.5 11.5 L12 8" stroke="#fff" stroke-width="1.8" fill="none"/></svg>
<div class="a" style="left:133px;top:261px;width:277px;height:176px;background:#fff"></div>
<div class="a" style="left:505px;top:261px;width:649px;height:293px;background:#fff"></div>
<div class="a" style="left:1249px;top:261px;width:277px;height:116px;background:#fff"></div>
<div class="a" style="left:131px;top:259px;width:281px;height:180px;border:2px solid #000"></div>
<div class="a" style="left:503px;top:259px;width:653px;height:297px;border:2px solid #000"></div>
<div class="a" style="left:503px;top:347px;width:653px;height:2px;background:#000"></div>
<div class="a" style="left:503px;top:408px;width:653px;height:1px;background:#000"></div>
<div class="a" style="left:503px;top:468px;width:653px;height:1px;background:#000"></div>
<div class="a" style="left:1247px;top:259px;width:281px;height:120px;border:2px solid #000"></div>
<div class="a" style="left:140px;top:268px;width:264px;height:164px;border-radius:20px;background:linear-gradient(180deg,#5b9bd5 0%,#5a99d3 30%,#558ec7 50%,#4b7fb4 75%,#3e6896 100%);box-shadow:inset 0 0 0 1px rgba(91,155,213,.8)"></div>
<div class="a" style="left:1256px;top:267.5px;width:264px;height:104.5px;border-radius:13px;background:linear-gradient(180deg,#5b9bd5 0%,#5a99d3 30%,#558ec7 50%,#4b7fb4 75%,#3e6896 100%);box-shadow:inset 0 0 0 1px rgba(91,155,213,.8)"></div>
<div class="t" style="left:140px;top:314.6px;width:264px;text-align:center;font-size:32px;font-weight:bold;color:#fff;transform:scaleX(.95)">Проверить</div>
<div class="t" style="left:140px;top:355.1px;width:264px;text-align:center;font-size:32px;font-weight:bold;color:#fff;transform:scaleX(.93)">отчёты</div>
<div class="t" style="left:1256px;top:293px;width:264px;text-align:center;font-size:24.2px;font-weight:bold;color:#fff">Поиск проблемных</div>
<div class="t" style="left:1256px;top:326px;width:264px;text-align:center;font-size:23.6px;font-weight:bold;color:#fff">отчетов</div>
<div class="t" style="left:505px;top:287px;width:649px;text-align:center;font-size:37.5px;font-weight:bold;color:#000;transform:scaleX(.896)">Инструкция</div>
<div class="t" style="left:508.5px;top:354.76px;font-size:19.18px;font-style:italic;color:#000">1. В ячейке "Кто проверяет?" Выберите человека, чья подпись</div>
<div class="t" style="left:508.5px;top:384.25px;font-size:19.2px;font-style:italic;color:#000">будет ставится в отчётах</div>
<div class="t" style="left:508.5px;top:414.26px;font-size:19.3px;font-style:italic;color:#000">2. Возьмите отчёты у ПТО, которые они уже подтянули в отчёт</div>
<div class="t" style="left:508.5px;top:442.56px;font-size:19.42px;font-style:italic;color:#000">ТТ (у каждого стыка в таком отчёте будет уникальный ID номер)</div>
<div class="t" style="left:508.5px;top:488.44px;font-size:19.56px;font-style:italic;color:#000">3. Нажмите на кнопку "Проверить отчёты" и выберите папку с</div>
<div class="t" style="left:508.5px;top:517.06px;font-size:19.19px;font-style:italic;color:#000">отчётами от ПТО</div>
<div class="a" style="left:1249px;top:409px;width:277px;height:29px;background:#00b0f0"></div>
<div class="a" style="left:1247px;top:407px;width:281px;height:2px;background:#000"></div>
<div class="a" style="left:1247px;top:407px;width:2px;height:31px;background:#000"></div>
<div class="a" style="left:1526px;top:407px;width:2px;height:31px;background:#000"></div>
<div class="a" style="left:1247px;top:437px;width:282px;height:33px;border:2px solid #1e7145;background:#fff"></div>
<div class="a" style="left:1250px;top:440px;width:276px;height:27px;background:#00b0f0"></div>
<div class="a" style="left:1524px;top:465px;width:7px;height:7px;background:#fff"></div>
<div class="a" style="left:1525px;top:466px;width:5px;height:5px;background:#1e7145"></div>
<div class="t" style="left:1249px;top:415.09px;width:277px;text-align:center;font-size:18.8px;color:#000">Кто проверяет?</div>
<div class="t" style="left:1250px;top:444.82px;width:276px;text-align:center;font-size:18.4px;color:#000">Кузнецов И.С.</div>
<div class="a" style="left:1528px;top:450px;width:17px;height:17px;background:linear-gradient(#fafafa,#eceef2);border:1px solid #a5a8b0"></div>
<svg width="10" height="6" style="left:1533px;top:457px"><path d="M0 0 H7.5 L3.75 4 Z" fill="#5f5f5f"/></svg>
<div class="a" style="left:0;top:990px;width:1900px;height:1px;background:#6e6e6e"></div>
<div class="a" style="left:0;top:1018px;width:1920px;height:1px;background:#3a3a3a"></div>
<svg width="80" height="28" style="left:0;top:990px">
<path d="M32 10 L28 13.5 L32 17 Z" fill="#9a9a9a"/>
<path d="M56 10 L60 13.5 L56 17 Z" fill="#9a9a9a"/>
</svg>
<div class="a" style="left:295px;top:990px;width:77px;height:23px;background:#fff"></div>
<div class="a" style="left:295px;top:1013px;width:77px;height:2px;background:#217346"></div>
<div class="a" style="left:100px;top:994px;width:1px;height:20px;background:#8a8a8a"></div>
<div class="a" style="left:172px;top:994px;width:1px;height:20px;background:#8a8a8a"></div>
<div class="a" style="left:217px;top:994px;width:1px;height:20px;background:#8a8a8a"></div>
<div class="a" style="left:435px;top:994px;width:1px;height:20px;background:#8a8a8a"></div>
<div class="a" style="left:549px;top:994px;width:1px;height:20px;background:#8a8a8a"></div>
<div class="t" style="left:114px;top:997.7px;font-size:12.3px;color:#fff;">Отчёты</div>
<div class="t" style="left:185px;top:997.7px;font-size:12px;color:#fff;">WB</div>
<div class="t" style="left:230px;top:997.7px;font-size:12.3px;color:#fff;">Сводная</div>
<div class="t" style="left:384.4px;top:997.7px;font-size:12px;color:#fff;">Статус</div>
<div class="t" style="left:449px;top:997.7px;font-size:12.4px;color:#fff;">Лог_Проверки</div>
<div class="t" style="left:307.9px;top:997.7px;font-size:12.4px;color:#217346;font-weight:bold">Главная</div>
<svg width="20" height="20" style="left:581px;top:994px">
<circle cx="10" cy="10" r="7.2" fill="none" stroke="#fff" stroke-width="1.3"/>
<path d="M10 6 V14 M6 10 H14" stroke="#fff" stroke-width="1.4"/>
</svg>
<div class="a" style="left:1152px;top:998.6px;width:3px;height:2.5px;background:#fff"></div>
<div class="a" style="left:1152px;top:1002.6px;width:3px;height:2.5px;background:#fff"></div>
<div class="a" style="left:1152px;top:1006.6px;width:3px;height:2.5px;background:#fff"></div>
<div class="a" style="left:1169px;top:997.5px;width:732px;height:14px;background:#333"></div>
<div class="a" style="left:1169px;top:997.5px;width:14px;height:14px;background:#4a4a4a"></div>
<div class="a" style="left:1185px;top:997.5px;width:305px;height:14px;background:#5a5a5a"></div>
<div class="a" style="left:1886.5px;top:997.5px;width:14px;height:14px;background:#4a4a4a"></div>
<svg width="740" height="20" style="left:1165px;top:995px">
<path d="M14 6.5 L9 9.5 L14 12.5 Z" fill="#8a8a8a"/>
<path d="M728 6.5 L733 9.5 L728 12.5 Z" fill="#8a8a8a"/>
</svg>
<div class="a" style="left:1902.5px;top:206px;width:14px;height:784px;background:#333"></div>
<div class="a" style="left:1902.5px;top:206px;width:14px;height:13px;background:#4a4a4a"></div>
<div class="a" style="left:1902.5px;top:221px;width:14px;height:723px;background:#5a5a5a"></div>
<div class="a" style="left:1902.5px;top:977px;width:14px;height:13px;background:#4a4a4a"></div>
<svg width="20" height="800" style="left:1900px;top:200px">
<path d="M6 13 L9.5 9.5 L13 13 Z" fill="#8a8a8a"/>
<path d="M6 783 L9.5 786.5 L13 783 Z" fill="#8a8a8a"/>
</svg>
<div class="t" style="left:8px;top:1022px;font-size:11.75px;color:#f0f0f0;">Готово</div>
<div class="a" style="left:1631px;top:1018.5px;width:38px;height:19.5px;background:#4a4a4a"></div>
<svg width="300" height="20" style="left:1620px;top:1018px" fill="none" stroke="#fff" stroke-width="1" shape-rendering="crispEdges">
<rect x="23.5" y="3.5" width="13" height="13"/>
<path d="M27.5 3.5 V16.5 M32.5 3.5 V16.5 M23.5 7.5 H36.5 M23.5 12.5 H36.5"/>
<rect x="60.5" y="3.5" width="14" height="13"/>
<rect x="63.5" y="6.5" width="8" height="7"/>
<path d="M65 8.5 H70 M65 10.5 H70"/>
<rect x="99.5" y="4.5" width="13" height="12.5"/>
<rect x="100" y="5" width="3" height="7" fill="#e8e8e8" stroke="none"/>
<rect x="104" y="5" width="3.5" height="7" fill="#e8e8e8" stroke="none"/>
<rect x="129.7" y="10" width="6.5" height="2" fill="#fff" stroke="none"/>
<rect x="139.8" y="10.5" width="100" height="1" fill="#fff" stroke="none"/>
<rect x="190" y="9" width="1" height="4.5" fill="#fff" stroke="none"/>
<rect x="194.5" y="5.3" width="5.5" height="11" fill="#fff" stroke="none"/>
<rect x="243" y="10" width="7.8" height="2" fill="#fff" stroke="none"/>
<rect x="245.9" y="6.8" width="2" height="8.2" fill="#fff" stroke="none"/>
</svg>
<div class="t" style="left:1882.5px;top:1022.4px;font-size:10.8px;color:#f0f0f0;">145 %</div>
</body></html>
